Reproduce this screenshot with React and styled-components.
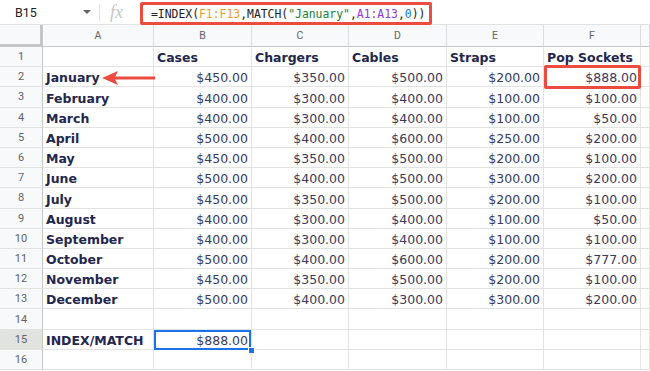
import React from 'react';
import styled, { createGlobalStyle } from 'styled-components';

const GlobalStyle = createGlobalStyle`
  html, body {
    margin: 0;
    padding: 0;
    background: #fff;
    overflow: hidden;
  }
`;

const Page = styled.div`
  width: 650px;
  height: 371px;
  overflow: hidden;
  background: #fff;
`;

const FormulaBar = styled.div`
  display: flex;
  height: 25px;
  box-sizing: border-box;
  border-bottom: 1px solid #e1e3e1;
`;

const NameBox = styled.div`
  width: 99px;
  box-sizing: border-box;
  display: flex;
  align-items: center;
  justify-content: space-between;
  padding: 0 8px 0 15px;
  font-family: Roboto, "Liberation Sans", sans-serif;
  font-size: 12.5px;
  color: #202124;
`;

const Caret = styled.span`
  width: 0;
  height: 0;
  border-left: 4px solid transparent;
  border-right: 4px solid transparent;
  border-top: 4px solid #5f6368;
`;

const Divider = styled.span`
  align-self: center;
  width: 1px;
  height: 17px;
  background: #e1e3e1;
`;

const Fx = styled.div`
  width: 40px;
  box-sizing: border-box;
  padding-left: 10px;
  display: flex;
  align-items: center;
  font-family: "Liberation Serif", serif;
  font-style: italic;
  font-size: 18px;
  color: #c4c7c5;
`;

const FormulaBox = styled.div`
  align-self: flex-end;
  width: 292px;
  height: 23px;
  box-sizing: border-box;
  border: 3px solid #ec4b40;
  border-radius: 2px;
  padding-left: 8px;
  display: flex;
  align-items: center;
  font-family: "DejaVu Sans Mono", "Liberation Mono", monospace;
  font-size: 11.4px;
  color: #202124;
  white-space: pre;
  position: relative;
  top: 1px;
`;

const Tok = styled.span`
  color: ${(p) => p.$c || '#202124'};
`;

const Sheet = styled.div`
  display: grid;
  grid-template-columns: 43px 111px 98px 97px 98px 97px 97px 1fr;
  grid-template-rows: 22px repeat(16, 20.2px);
  font-family: "DejaVu Sans", Verdana, sans-serif;
`;

const Corner = styled.div`
  background: #f8f9fa;
  box-sizing: border-box;
  border-right: 3px solid #c4c7c5;
  border-bottom: 3px solid #c4c7c5;
`;

const ColHead = styled.div`
  background: #f8f9fa;
  box-sizing: border-box;
  border-right: 1px solid #dadce0;
  border-bottom: 1px solid #c4c7c5;
  display: flex;
  align-items: center;
  justify-content: center;
  font-family: Roboto, "Liberation Sans", sans-serif;
  font-size: 10.5px;
  color: #5f6368;
`;

const RowHead = styled.div`
  background: ${(p) => (p.$active ? '#e1e3e1' : '#f8f9fa')};
  box-sizing: border-box;
  border-right: 1px solid #c4c7c5;
  border-bottom: 1px solid #e1e3e1;
  display: flex;
  align-items: center;
  justify-content: center;
  font-family: Roboto, "Liberation Sans", sans-serif;
  font-size: 11px;
  color: #5f6368;
`;

const Cell = styled.div`
  position: relative;
  box-sizing: border-box;
  border-right: 1px solid #e1e3e1;
  border-bottom: 1px solid #e1e3e1;
  display: flex;
  align-items: flex-end;
  justify-content: ${(p) => (p.$right ? 'flex-end' : 'flex-start')};
  padding: 0 3px 0 3px;
  font-size: 12.5px;
  line-height: 16px;
  white-space: nowrap;
  font-weight: ${(p) => (p.$bold ? 700 : 400)};
  color: ${(p) => (p.$bold ? '#23264d' : '#383a5c')};

  ${(p) =>
    p.$flagged &&
    `
    &::after {
      content: '';
      position: absolute;
      top: -2px;
      bottom: -3px;
      left: 0;
      right: -1px;
      border: 3px solid #ec4b40;
      border-radius: 2px;
      z-index: 2;
    }
  `}

  ${(p) =>
    p.$selected &&
    `
    &::after {
      content: '';
      position: absolute;
      top: 0;
      bottom: -1px;
      left: 0;
      right: 0;
      border: 2px solid #1a73e8;
      z-index: 2;
    }
    &::before {
      content: '';
      position: absolute;
      right: -4px;
      bottom: -5px;
      width: 5px;
      height: 5px;
      background: #1a73e8;
      border: 1px solid #fff;
      z-index: 3;
    }
  `}
`;

const Arrow = styled.svg`
  position: absolute;
  left: 59px;
  top: 3px;
  z-index: 2;
`;

const columns = ['A', 'B', 'C', 'D', 'E', 'F', ''];

const products = ['Cases', 'Chargers', 'Cables', 'Straps', 'Pop Sockets'];

const sales = [
  ['January', 450, 350, 500, 200, 888],
  ['February', 400, 300, 400, 100, 100],
  ['March', 400, 300, 400, 100, 50],
  ['April', 500, 400, 600, 250, 200],
  ['May', 450, 350, 500, 200, 100],
  ['June', 500, 400, 500, 300, 200],
  ['July', 450, 350, 500, 200, 100],
  ['August', 400, 300, 400, 100, 50],
  ['September', 400, 300, 400, 100, 100],
  ['October', 500, 400, 600, 200, 777],
  ['November', 450, 350, 500, 200, 100],
  ['December', 500, 400, 300, 300, 200],
];

const money = (n) => `$${n.toFixed(2)}`;

const LeftArrow = () => (
  <Arrow width="53" height="16" viewBox="0 0 53 16">
    <line x1="12" y1="8" x2="53" y2="8" stroke="#ec4b40" strokeWidth="3" />
    <path d="M0 8 L16 1 L12.5 8 L16 15 Z" fill="#ec4b40" />
  </Arrow>
);

const EmptyRow = ({ n, active, children }) => (
  <>
    <RowHead $active={active}>{n}</RowHead>
    {children}
  </>
);

const App = () => {
  return (
    <Page>
      <GlobalStyle />
      <FormulaBar>
        <NameBox>
          B15
          <Caret />
        </NameBox>
        <Divider />
        <Fx>fx</Fx>
        <FormulaBox>
          <Tok>=INDEX(</Tok>
          <Tok $c="#f09a2c">F1:F13</Tok>
          <Tok>,MATCH(</Tok>
          <Tok $c="#188038">"January"</Tok>
          <Tok>,</Tok>
          <Tok $c="#9334e6">A1:A13</Tok>
          <Tok>,</Tok>
          <Tok $c="#1a73e8">0</Tok>
          <Tok>))</Tok>
        </FormulaBox>
      </FormulaBar>

      <Sheet>
        <Corner />
        {columns.map((c, i) => (
          <ColHead key={i}>{c}</ColHead>
        ))}

        <RowHead>1</RowHead>
        <Cell />
        {products.map((p) => (
          <Cell key={p} $bold>
            {p}
          </Cell>
        ))}
        <Cell />

        {sales.map(([month, ...vals], r) => (
          <React.Fragment key={month}>
            <RowHead>{r + 2}</RowHead>
            <Cell $bold>
              {month}
              {r === 0 && <LeftArrow />}
            </Cell>
            {vals.map((v, i) => (
              <Cell key={i} $right $flagged={r === 0 && i === 4}>
                {money(v)}
              </Cell>
            ))}
            <Cell />
          </React.Fragment>
        ))}

        <EmptyRow n={14}>
          {columns.map((c, i) => (
            <Cell key={i} />
          ))}
        </EmptyRow>

        <EmptyRow n={15} active>
          <Cell $bold>INDEX/MATCH</Cell>
          <Cell $right $selected>
            $888.00
          </Cell>
          {columns.slice(2).map((c, i) => (
            <Cell key={i} />
          ))}
        </EmptyRow>

        <EmptyRow n={16}>
          {columns.map((c, i) => (
            <Cell key={i} />
          ))}
        </EmptyRow>
      </Sheet>
    </Page>
  );
};

export default App;
